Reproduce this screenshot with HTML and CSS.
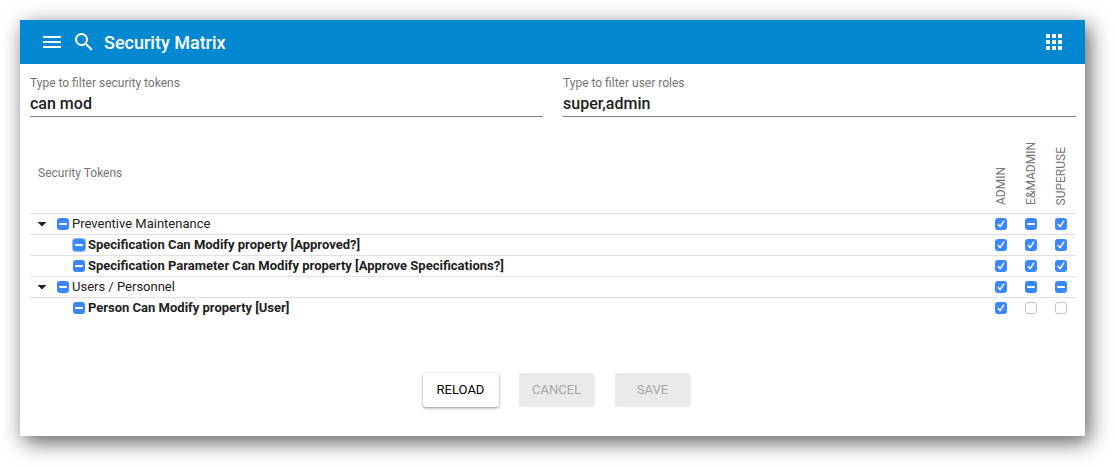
FILE: index.html
```html
<!DOCTYPE html>
<html lang="en">
<head>
<meta charset="utf-8">
<title>Security Matrix</title>
<link rel="stylesheet" href="styles.css">
</head>
<body>
<main class="panel">
  <header class="topbar">
    <button class="icon-btn" aria-label="Menu"><svg viewBox="0 0 24 24"><path d="M3 18h18v-2H3v2zm0-5h18v-2H3v2zm0-7v2h18V6H3z"/></svg></button>
    <button class="icon-btn" aria-label="Search"><svg viewBox="0 0 24 24"><path d="M15.5 14h-.79l-.28-.27A6.471 6.471 0 0 0 16 9.500 6.500 6.500 0 1 0 9.500 16c1.610 0 3.090-.590 4.230-1.570l.27.28v.79l5 4.990L20.490 19l-4.990-5zm-6 0C7.010 14 5 11.990 5 9.500S7.010 5 9.500 5 14 7.010 14 9.500 11.990 14 9.500 14z"/></svg></button>
    <h1 class="title">Security Matrix</h1>
    <button class="icon-btn apps" aria-label="Apps"><svg viewBox="0 0 24 24"><path d="M4 8h4V4H4v4zm6 12h4v-4h-4v4zm-6 0h4v-4H4v4zm0-6h4v-4H4v4zm6 0h4v-4h-4v4zm6-10v4h4V4h-4zm-6 4h4V4h-4v4zm6 6h4v-4h-4v4zm0 6h4v-4h-4v4z"/></svg></button>
  </header>
  <section class="filters">
    <div class="field">
      <label for="tokens">Type to filter security tokens</label>
      <input id="tokens" type="text" value="can mod">
    </div>
    <div class="field">
      <label for="roles">Type to filter user roles</label>
      <input id="roles" type="text" value="super,admin">
    </div>
  </section>
  <table class="matrix">
    <thead>
      <tr>
        <th class="tokens-head" scope="col">Security Tokens</th>
        <th class="role" scope="col"><span>ADMIN</span></th>
        <th class="role" scope="col"><span>E&amp;MADMIN</span></th>
        <th class="role" scope="col"><span>SUPERUSE</span></th>
      </tr>
    </thead>
    <tbody>
      <tr>
        <td><div class="token"><button class="toggle" aria-label="Collapse"></button><label><input type="checkbox" class="mixed">Preventive Maintenance</label></div></td>
        <td><input type="checkbox" aria-label="ADMIN" checked></td>
        <td><input type="checkbox" aria-label="E&amp;MADMIN" class="mixed"></td>
        <td><input type="checkbox" aria-label="SUPERUSE" checked></td>
      </tr>
      <tr>
        <td><div class="token child"><label><input type="checkbox" class="mixed current">Specification Can Modify property [Approved?]</label></div></td>
        <td><input type="checkbox" aria-label="ADMIN" checked></td>
        <td><input type="checkbox" aria-label="E&amp;MADMIN" checked></td>
        <td><input type="checkbox" aria-label="SUPERUSE" checked></td>
      </tr>
      <tr>
        <td><div class="token child"><label><input type="checkbox" class="mixed">Specification Parameter Can Modify property [Approve Specifications?]</label></div></td>
        <td><input type="checkbox" aria-label="ADMIN" checked></td>
        <td><input type="checkbox" aria-label="E&amp;MADMIN" checked></td>
        <td><input type="checkbox" aria-label="SUPERUSE" checked></td>
      </tr>
      <tr>
        <td><div class="token"><button class="toggle" aria-label="Collapse"></button><label><input type="checkbox" class="mixed">Users / Personnel</label></div></td>
        <td><input type="checkbox" aria-label="ADMIN" checked></td>
        <td><input type="checkbox" aria-label="E&amp;MADMIN" class="mixed"></td>
        <td><input type="checkbox" aria-label="SUPERUSE" class="mixed"></td>
      </tr>
      <tr>
        <td><div class="token child"><label><input type="checkbox" class="mixed">Person Can Modify property [User]</label></div></td>
        <td><input type="checkbox" aria-label="ADMIN" checked></td>
        <td><input type="checkbox" aria-label="E&amp;MADMIN"></td>
        <td><input type="checkbox" aria-label="SUPERUSE"></td>
      </tr>
    </tbody>
  </table>
  <footer class="actions">
    <button class="btn">RELOAD</button>
    <button class="btn" disabled>CANCEL</button>
    <button class="btn" disabled>SAVE</button>
  </footer>
</main>
<script src="script.js"></script>
</body>
</html>
```
FILE: styles.css
```css
* { box-sizing: border-box; }
body {
  margin: 0;
  padding: 20px 30px 30px 20px;
  background: #fff;
  color: #212121;
  font-family: Roboto, "Liberation Sans", sans-serif;
  font-size: 13px;
}
button, input { font: inherit; color: inherit; }
.panel {
  background: #fff;
  box-shadow: 4px 6px 20px rgba(0, 0, 0, 0.64);
}
.topbar {
  display: flex;
  align-items: center;
  gap: 8px;
  height: 44px;
  padding: 0 19px 0 20px;
  background: #0288d1;
  color: #fff;
}
.icon-btn {
  width: 24px;
  height: 24px;
  padding: 0;
  border: 0;
  background: none;
}
.icon-btn svg { display: block; fill: #fff; }
.title { margin: 0; padding-top: 2px; font-size: 18px; font-weight: 500; line-height: 24px; }
.apps { margin-left: auto; }
.filters {
  display: grid;
  grid-template-columns: 1fr 1fr;
  gap: 20px;
  padding: 11px 9px 0 10px;
}
.field { display: flex; flex-direction: column; }
.field label { color: #757575; font-size: 12px; line-height: 16px; }
.field input {
  width: 100%;
  height: 26px;
  padding: 0;
  border: 0;
  border-bottom: 1px solid #808080;
  border-radius: 0;
  outline: 0;
  background: none;
  font-size: 16px;
  font-weight: 500;
}
.matrix {
  width: calc(100% - 19px);
  margin: 16px 9px 0 10px;
  border-collapse: separate;
  border-spacing: 0;
  table-layout: fixed;
}
.matrix th { height: 80px; padding: 0; color: #757575; font-size: 12px; font-weight: 400; }
.matrix .tokens-head { padding-left: 8px; text-align: left; }
.matrix .role { width: 30px; padding-bottom: 8px; vertical-align: bottom; }
.role span {
  display: block;
  width: 30px;
  line-height: 30px;
  writing-mode: vertical-rl;
  transform: rotate(180deg);
  text-align: left;
}
.matrix td {
  height: 21px;
  padding: 0;
  border-top: 1px solid #e0e0e0;
  text-align: center;
  line-height: 20px;
}
.token { display: flex; align-items: center; padding-left: 7px; }
.token.child { padding-left: 43px; font-weight: 700; }
.token label { display: flex; align-items: center; gap: 3px; }
.toggle {
  width: 10px;
  height: 5px;
  margin-right: 10px;
  padding: 0;
  border: 0;
  background: #212121;
  clip-path: polygon(0 0, 100% 0, 50% 100%);
}
.matrix input {
  appearance: none;
  display: grid;
  place-items: center;
  width: 12px;
  height: 12px;
  margin: 0 auto;
  border: 1px solid #c4c4c4;
  border-radius: 3px;
  background: #fff;
}
.matrix input:checked, .matrix input:indeterminate { border: 0; background: #3b87fd; }
.matrix input:checked::before {
  content: "";
  width: 8px;
  height: 8px;
  background: #fff;
  clip-path: polygon(4% 56%, 18% 44%, 38% 70%, 80% 2%, 96% 12%, 40% 98%);
}
.matrix input:indeterminate::before {
  content: "";
  width: 8px;
  height: 2px;
  border-radius: 1px;
  background: #fff;
}
.matrix .current { box-shadow: 0 0 0 1px #8bb8fb; }
.actions { display: flex; justify-content: center; gap: 20px; padding: 55px 0 29px 8px; }
.btn {
  min-width: 76px;
  height: 34px;
  padding: 0 14px 1px;
  border: 0;
  border-radius: 3px;
  background: #fff;
  color: #000;
  font-size: 13px;
  box-shadow: 0 1px 3px rgba(0, 0, 0, 0.45);
}
.btn:disabled { padding: 0 12px 1px; background: #eaeaea; color: #a6a6a6; box-shadow: none; }
```
FILE: script.js
```js
document.querySelectorAll("input.mixed").forEach((box) => {
  box.indeterminate = true;
});
```
